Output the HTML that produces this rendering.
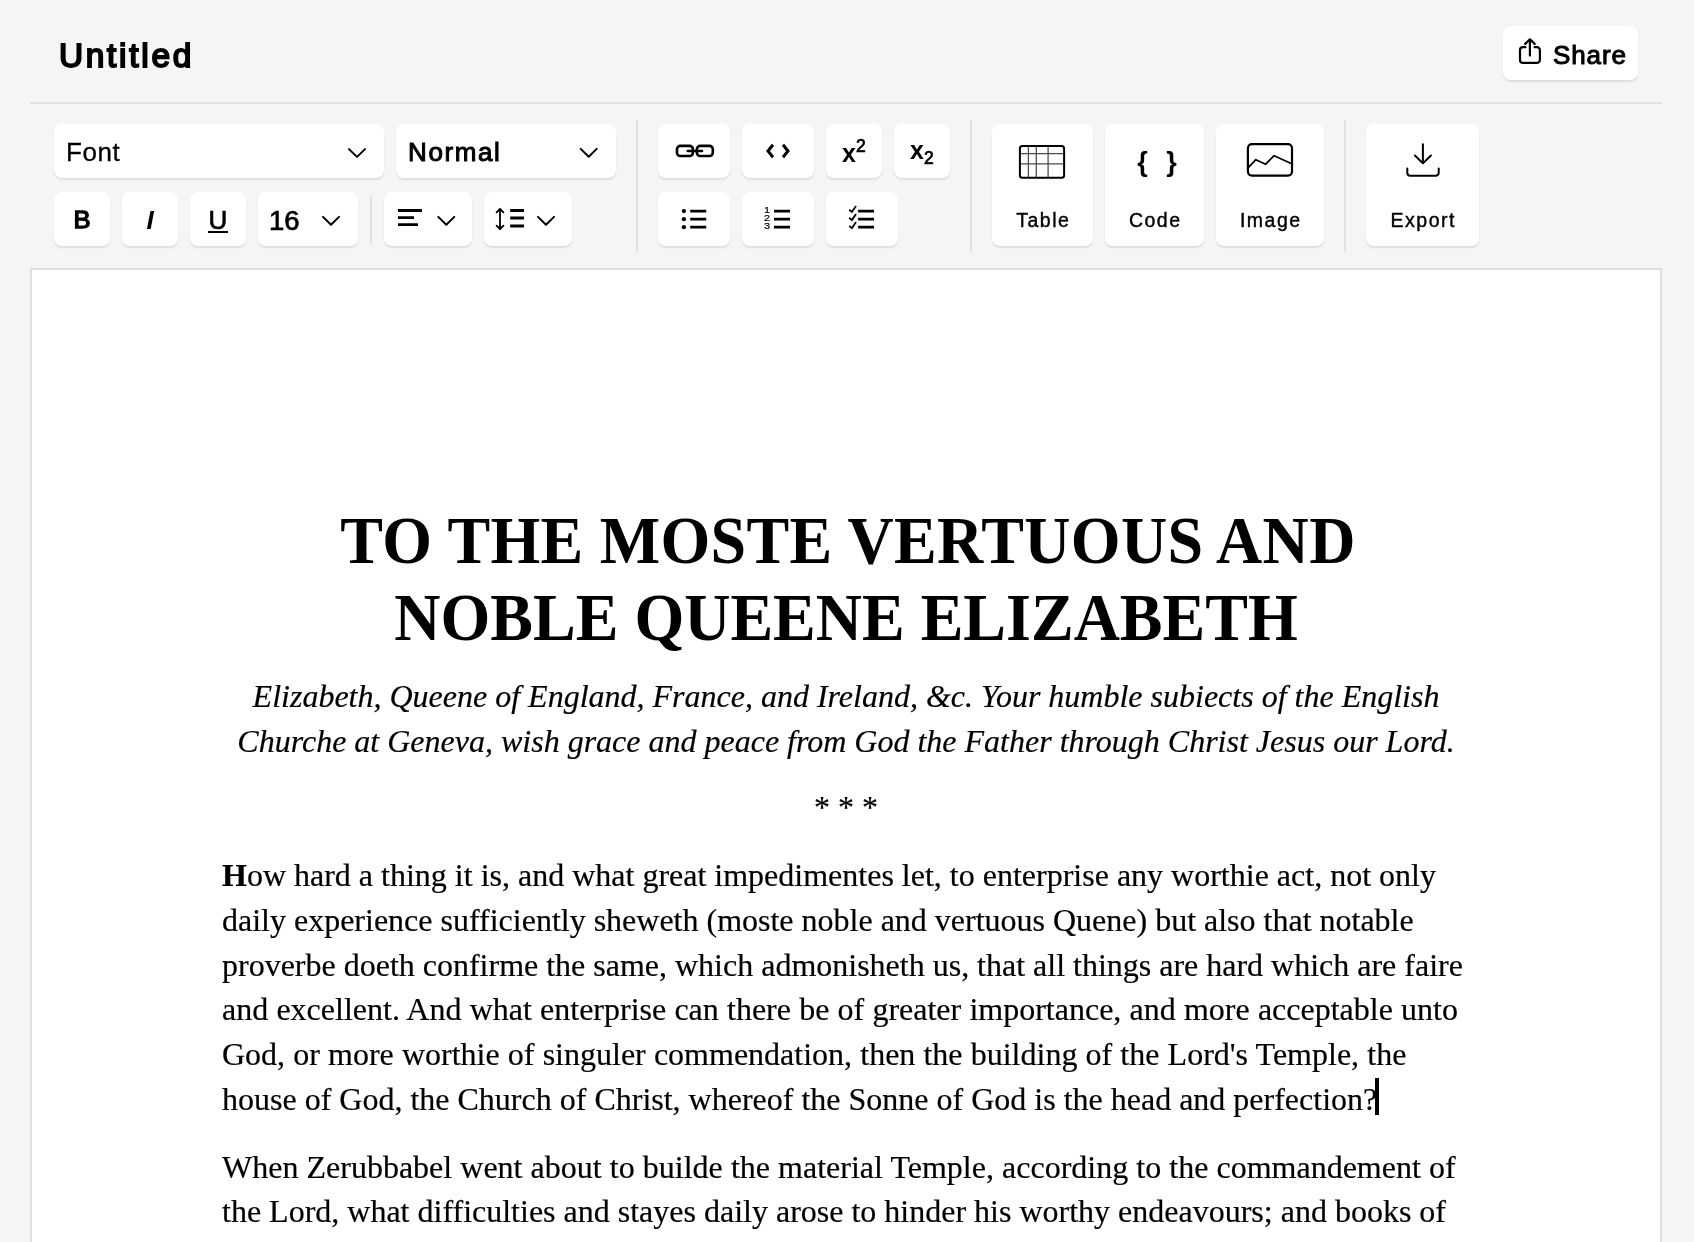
<!DOCTYPE html>
<html lang="en">
<head>
<meta charset="utf-8">
<title>Untitled</title>
<style>
*{box-sizing:border-box;margin:0;padding:0}
html,body{width:1694px;height:1242px;overflow:hidden;background:#f5f5f5}
body{position:relative;font-family:"Liberation Sans",sans-serif;color:#000}
.abs{position:absolute}
.btn{position:absolute;background:#fff;border-radius:8px;box-shadow:0 1.5px 1.5px rgba(30,30,60,.10)}
.btn svg{position:absolute;overflow:visible}
.lbl{position:absolute;white-space:nowrap;line-height:1}
.vd{position:absolute;width:2px;background:#e1e2e5}
svg .s{fill:none;stroke:#000;stroke-linecap:round;stroke-linejoin:round}
svg .b{fill:none;stroke:#000;stroke-linecap:butt}
svg .bm{fill:none;stroke:#000;stroke-linecap:butt;stroke-linejoin:miter}
.lbl.c{left:0;width:100%;text-align:center}
.m{-webkit-text-stroke:.7px #000}
.sb{-webkit-text-stroke:1px #000}
.m2{-webkit-text-stroke:.4px #000;padding-left:1.500px}
#top{position:absolute;left:0;top:0;width:1694px;height:268px;will-change:transform}
#title{left:58.900px;top:39.200px;font-size:33.400px;-webkit-text-stroke:1.900px #000;letter-spacing:2.750px}
#hr{left:30px;top:102px;width:1632px;height:2px;background:#e0e0e3}
#doc{will-change:transform;position:absolute;left:30px;top:268px;width:1632px;height:1000px;background:#fff;border:2px solid #dfdfdf}
#content{position:absolute;left:190px;top:0;width:1248px;font-family:"Liberation Serif",serif;color:#000}
#content h1{position:absolute;left:-20px;right:-20px;top:234.7px;text-align:center;font-size:64px;line-height:73.33px;font-weight:700;white-space:nowrap;transform:scaleY(1.05);transform-origin:50% 58.27px}
#content h1 .l1{letter-spacing:.3px;position:relative;left:2px}
#content .sub{-webkit-text-stroke:.2px #000;position:absolute;left:-20px;right:-20px;top:403.5px;text-align:center;font-size:32px;line-height:45px;font-style:italic}
#content .stars{-webkit-text-stroke:.2px #000;position:absolute;left:0;width:100%;top:515px;text-align:center;font-size:32px;line-height:45px}
#content p{-webkit-text-stroke:.2px #000;position:absolute;left:0;width:1260px;font-size:32px;line-height:44.8px;white-space:nowrap}
.caret{position:absolute;left:1153.300px;top:807.700px;width:3.900px;height:37.600px;background:#000}
</style>
</head>
<body>
<div id="top">
<div id="title" class="lbl">Untitled</div>
<div id="hr" class="abs"></div>
<div class="btn" style="left:1503px;top:26px;width:135px;height:54px"><div class="lbl sb" style="left:50px;top:16px;font-size:26px;letter-spacing:.9px">Share</div></div>
<div class="btn" style="left:54px;top:124px;width:330px;height:54px"><div class="lbl" style="left:12px;top:15px;font-size:26px;letter-spacing:.6px;-webkit-text-stroke:.3px #000">Font</div></div>
<div class="btn" style="left:396px;top:124px;width:220px;height:54px"><div class="lbl sb" style="left:12px;top:15px;font-size:26px;letter-spacing:1.600px">Normal</div></div>
<div class="btn" style="left:54px;top:192px;width:56px;height:54px"><div class="lbl c" style="top:16px;font-size:24.200px;-webkit-text-stroke:1.300px #000;transform:scaleX(1.06)">B</div></div>
<div class="btn" style="left:122px;top:192px;width:56px;height:54px"><div class="lbl c" style="top:15px;font-size:26px;font-weight:700;font-style:italic">I</div></div>
<div class="btn" style="left:190px;top:192px;width:56px;height:54px"><div class="lbl c m" style="top:15px;font-size:26px">U</div><div class="abs" style="left:18px;top:39px;width:20px;height:2px;background:#000"></div></div>
<div class="btn" style="left:258px;top:192px;width:100px;height:54px"><div class="lbl m" style="left:11px;top:14.500px;font-size:27.500px">16</div></div>
<div class="btn" style="left:384px;top:192px;width:88px;height:54px"></div>
<div class="btn" style="left:484px;top:192px;width:88px;height:54px"></div>
<div class="btn" style="left:658px;top:124px;width:72px;height:54px"></div>
<div class="btn" style="left:742px;top:124px;width:72px;height:54px"></div>
<div class="btn" style="left:826px;top:124px;width:56px;height:54px"><div class="lbl" style="left:16px;top:17px;font-size:25px;font-weight:700">x</div><div class="lbl m" style="left:30px;top:14px;font-size:17.500px">2</div></div>
<div class="btn" style="left:894px;top:124px;width:56px;height:54px"><div class="lbl" style="left:16px;top:14px;font-size:25px;font-weight:700">x</div><div class="lbl m" style="left:30px;top:26px;font-size:17.500px">2</div></div>
<div class="btn" style="left:658px;top:192px;width:72px;height:54px"></div>
<div class="btn" style="left:742px;top:192px;width:72px;height:54px"><div class="lbl" style="left:22px;top:13.700px;font-size:9.600px;line-height:8.100px;-webkit-text-stroke:.2px #000;transform:scaleX(1.14);transform-origin:0 0">1<br>2<br>3</div></div>
<div class="btn" style="left:826px;top:192px;width:72px;height:54px"></div>
<div class="btn" style="left:992px;top:124px;width:101px;height:122px"><div class="lbl c m2" style="top:86.700px;font-size:19.500px;letter-spacing:1.500px">Table</div></div>
<div class="btn" style="left:1105px;top:124px;width:99px;height:122px"><div class="lbl c" style="top:25.300px;font-size:27px;font-weight:700;word-spacing:11px;padding-left:5px">{ }</div><div class="lbl c m2" style="top:86.700px;font-size:19.500px;letter-spacing:1.500px">Code</div></div>
<div class="btn" style="left:1216px;top:124px;width:108px;height:122px"><div class="lbl c m2" style="top:86.700px;font-size:19.500px;letter-spacing:1.500px">Image</div></div>
<div class="btn" style="left:1366px;top:124px;width:113px;height:122px"><div class="lbl c m2" style="top:86.700px;font-size:19.500px;letter-spacing:1.500px">Export</div></div>
<div class="vd" style="left:370px;top:196px;height:48px"></div>
<div class="vd" style="left:636px;top:120px;height:132px"></div>
<div class="vd" style="left:970px;top:120px;height:132px"></div>
<div class="vd" style="left:1344px;top:120px;height:132px"></div>
<svg class="abs" style="left:0;top:0" width="1694" height="268" viewBox="0 0 1694 268"><path class="s" stroke-width="2" d="M349 149.1L357 156.9L365 149.1"/><path class="s" stroke-width="2" d="M580.7 148.9L588.7 156.70000000000002L596.7 148.9"/><path class="s" stroke-width="2" d="M323 216.9L331 224.70000000000002L339 216.9"/><path class="s" stroke-width="2" d="M438.3 216.9L446.3 224.70000000000002L454.3 216.9"/><path class="s" stroke-width="2" d="M538 216.9L546 224.70000000000002L554 216.9"/><path class="s" stroke-width="2.200" d="M1525.400 47.200H1523a3 3 0 0 0-3 3V59.900a3 3 0 0 0 3 3H1536.900a3 3 0 0 0 3-3V50.200a3 3 0 0 0-3-3H1534.600M1529.900 55.600V39.600M1525.200 43.900L1529.900 39.300L1534.700 43.900"/><path class="b" stroke-width="2.800" d="M398 210.500h24M398 217.600h16M398 224.600h20"/><path class="s" stroke-width="1.800" d="M500 208.800V229.200M496.600 212.300L500 208.800L503.400 212.300M496.600 225.700L500 229.200L503.400 225.700"/><path class="b" stroke-width="3" d="M510.200 210.500H524M510.200 218H524M510.200 226H524"/><rect class="s" stroke-width="2.600" x="677" y="145.900" width="15.900" height="10.100" rx="3.200"/><rect class="s" stroke-width="2.600" x="696.900" y="145.900" width="15.900" height="10.100" rx="3.200"/><path class="s" stroke-width="2.600" d="M687.800 151H702"/><path class="bm" stroke-width="3" d="M773 144.800L768 151L773 157.200M783 144.800L788 151L783 157.200"/><circle cx="683.900" cy="211.1" r="2.150"/><circle cx="683.900" cy="219.2" r="2.150"/><circle cx="683.900" cy="227.2" r="2.150"/><path class="b" stroke-width="2.800" d="M690.200 211.100H706.200M690.200 219.200H706.200M690.200 227.200H706.200"/><path class="b" stroke-width="2.800" d="M774 211.100H790M774 219.200H790M774 227.200H790"/><path class="b" stroke-width="2.800" d="M858.100 211.100H874M858.100 219.200H874M858.100 227.200H874"/><path class="bm" stroke-width="1.800" d="M849.2 209.7L851.9 212.0L856.0 205.9"/><path class="bm" stroke-width="1.800" d="M849.2 217.79999999999998L851.9 220.1L856.0 214.0"/><path class="bm" stroke-width="1.800" d="M849.2 225.89999999999998L851.9 228.2L856.0 222.1"/><path class="b" style="stroke:#4a4a4a" stroke-width="1.250" d="M1028.400 146V177.600M1036.300 146V177.600M1048.100 146V177.600M1020 153.600H1064M1020 163.900H1064"/><rect class="s" stroke-width="2" x="1019.900" y="145.900" width="44.200" height="31.800" rx="2.500"/><rect class="s" stroke-width="2.200" x="1247.900" y="144.200" width="44.100" height="31.400" rx="4"/><path class="s" stroke-width="1.800" d="M1248.200 167.600L1255.900 159.700L1265.500 164.300L1274.100 155.700L1292.300 164"/><path class="s" stroke-width="2" d="M1422.900 144.300V163.300M1414.900 155.500L1422.900 163.400L1430.900 155.500M1407.300 168.600v4.100a3 3 0 0 0 3 3h25.400a3 3 0 0 0 3-3v-4.100"/></svg>

</div>
<!-- document -->
<div id="doc">
 <div id="content">
  <h1><span class="l1">TO THE MOSTE VERTUOUS AND</span><br>NOBLE QUEENE ELIZABETH</h1>
  <div class="sub">Elizabeth, Queene of England, France, and Ireland, &amp;c. Your humble subiects of the English<br>Churche at Geneva, wish grace and peace from God the Father through Christ Jesus our Lord.</div>
  <div class="stars">* * *</div>
  <p style="top:583px"><b>H</b>ow hard a thing it is, and what great impedimentes let, to enterprise any worthie act, not only<br><span style="word-spacing:-.02px">daily experience sufficiently sheweth (moste noble and vertuous Quene) but also that notable</span><br><span style="word-spacing:-.03px">proverbe doeth confirme the same, which admonisheth us, that all things are hard which are faire</span><br><span style="word-spacing:.2px">and excellent. And what enterprise can there be of greater importance, and more acceptable unto</span><br><span style="word-spacing:.15px">God, or more worthie of singuler commendation, then the building of the Lord's Temple, the</span><br>house of God, the Church of Christ, whereof the Sonne of God is the head and perfection?</p>
  <div class="caret"></div>
  <p style="top:874.600px"><span style="word-spacing:.1px">When Zerubbabel went about to builde the material Temple, according to the commandement of</span><br>the Lord, what difficulties and stayes daily arose to hinder his worthy endeavours; and books of</p>
 </div>
</div>
</body>
</html>
